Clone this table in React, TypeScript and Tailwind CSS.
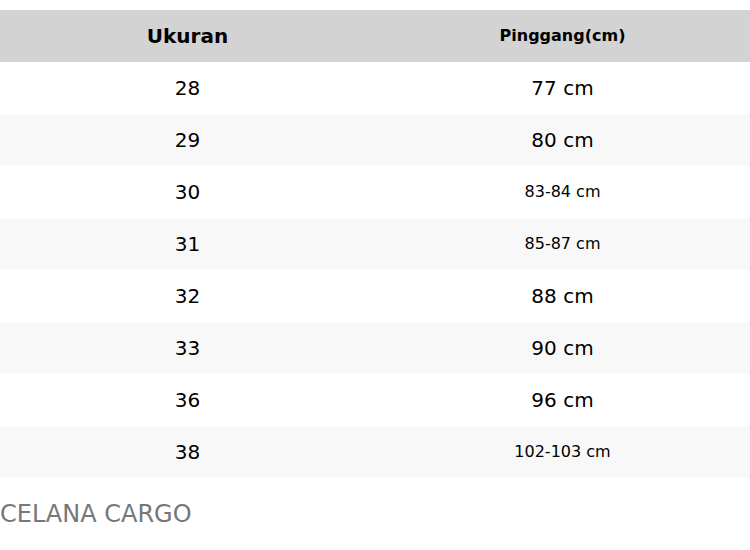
import React from "react";

const rows: [string, string, boolean][] = [
  ["28", "77 cm", false],
  ["29", "80 cm", false],
  ["30", "83-84 cm", true],
  ["31", "85-87 cm", true],
  ["32", "88 cm", false],
  ["33", "90 cm", false],
  ["36", "96 cm", false],
  ["38", "102-103 cm", true],
];

export default function App() {
  return (
    <div className="w-[750px] h-[550px] bg-white overflow-hidden" style={{ fontFamily: '"DejaVu Sans", sans-serif' }}>
      <div className="pt-[10px]">
        <div className="grid grid-cols-2 h-[52px] bg-[#d3d3d3] text-black font-bold">
          <div className="flex items-center justify-center text-[20px]">Ukuran</div>
          <div className="flex items-center justify-center text-[16px]">Pinggang(cm)</div>
        </div>
        {rows.map(([a, b, small], i) => (
          <div key={a} className={`grid grid-cols-2 h-[52px] text-black ${i % 2 === 1 ? "bg-[#f8f8f8]" : "bg-white"}`}>
            <div className="flex items-center justify-center text-[20px]">{a}</div>
            <div className={`flex items-center justify-center ${small ? "text-[16px]" : "text-[20px]"}`}>{b}</div>
          </div>
        ))}
      </div>
      <div className="mt-[22px] text-[24px] leading-[28px] text-[#777777]">CELANA CARGO</div>
    </div>
  );
}
